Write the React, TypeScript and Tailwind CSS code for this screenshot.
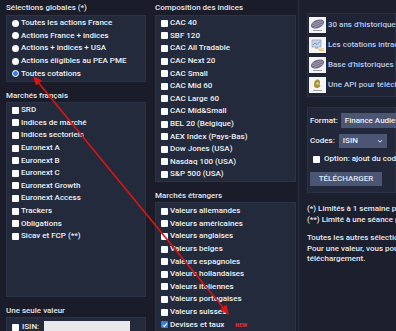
import React from 'react';

const Check = ({ checked = false }: { checked?: boolean }) =>
  checked ? (
    <span className="flex h-[7px] w-[7px] shrink-0 items-center justify-center rounded-[1px] bg-[#2f7fe6]">
      <svg viewBox="0 0 8 8" className="h-[6px] w-[6px]">
        <path d="M1.3 4.2 3.2 6 6.7 1.8" fill="none" stroke="#fff" strokeWidth="1.5" />
      </svg>
    </span>
  ) : (
    <span className="h-[7px] w-[7px] shrink-0 rounded-[1px] bg-white" />
  );

const Radio = ({ on = false }: { on?: boolean }) =>
  on ? (
    <span className="h-[7px] w-[7px] shrink-0 rounded-full border-[1.5px] border-white bg-[#2f7fe6]" />
  ) : (
    <span className="h-[7px] w-[7px] shrink-0 rounded-full bg-white" />
  );

const Row = ({ children, label }: { children: React.ReactNode; label: string }) => (
  <div className="flex h-[12.6px] items-center gap-[2px] whitespace-nowrap">
    {children}
    <span>{label}</span>
  </div>
);

const Title = ({ text }: { text: string }) => (
  <div className="h-[12px] whitespace-nowrap leading-[12px] text-[#e4e6ec]">{text}</div>
);

const globales = [
  'Toutes les actions France',
  'Actions France + indices',
  'Actions + indices + USA',
  'Actions éligibles au PEA PME',
  'Toutes cotations',
];

const francais = [
  'SRD',
  'Indices de marché',
  'Indices sectoriels',
  'Euronext A',
  'Euronext B',
  'Euronext C',
  'Euronext Growth',
  'Euronext Access',
  'Trackers',
  'Obligations',
  'Sicav et FCP (**)',
];

const indices = [
  'CAC 40',
  'SBF 120',
  'CAC All Tradable',
  'CAC Next 20',
  'CAC Small',
  'CAC Mid 60',
  'CAC Large 60',
  'CAC Mid&Small',
  'BEL 20 (Belgique)',
  'AEX Index (Pays-Bas)',
  'Dow Jones (USA)',
  'Nasdaq 100 (USA)',
  'S&P 500 (USA)',
];

const etrangers = [
  'Valeurs allemandes',
  'Valeurs américaines',
  'Valeurs anglaises',
  'Valeurs belges',
  'Valeurs espagnoles',
  'Valeurs hollandaises',
  'Valeurs italiennes',
  'Valeurs portugaises',
  'Valeurs suisses',
];

const Globe = () => (
  <svg viewBox="0 0 17 16" className="h-[16px] w-[17px] shrink-0">
    <rect width="17" height="16" fill="#f4f4f4" />
    <ellipse cx="8.5" cy="7" rx="7" ry="4" transform="rotate(-22 8.5 7)" fill="#6f6a86" />
    <path d="M3 9 14 4.5M3.5 7 12 3.5M5 10.5 14.5 6.5" stroke="#b9b4cc" strokeWidth="0.7" />
    <rect x="4" y="13" width="9" height="1" fill="#9a9aa8" />
  </svg>
);

const Screen = () => (
  <svg viewBox="0 0 17 16" className="h-[16px] w-[17px] shrink-0">
    <rect width="17" height="16" fill="#f4f4f4" />
    <rect x="3" y="3" width="9" height="7" fill="#c9d6ea" stroke="#7f8ea8" strokeWidth="0.6" />
    <path d="M4 8 6 6 8 7.5 11 4.5" stroke="#3b6fc4" strokeWidth="0.7" fill="none" />
    <rect x="6" y="10.5" width="3" height="1" fill="#7f8ea8" />
    <path d="M9 12h6M10 13.5h5" stroke="#d8b84a" strokeWidth="0.8" />
  </svg>
);

const Api = () => (
  <svg viewBox="0 0 17 16" className="h-[16px] w-[17px] shrink-0">
    <rect width="17" height="16" fill="#f4f4f4" />
    <path d="M7 3c2-1 4 0 4 2s-1 2 0 3-1 3-3 3-3-1-3-3 0-4 2-5z" fill="#a8963a" />
    <circle cx="8.5" cy="6.5" r="1.2" fill="#e3d27a" />
    <rect x="4" y="13" width="9" height="1" fill="#a0a0a0" />
  </svg>
);

export default function App() {
  return (
    <div className="relative h-[331px] w-[396px] overflow-hidden bg-[#1a1d29] font-['Roboto',sans-serif] text-[8px] font-medium text-[#eef0f4]">
      <div className="flex h-full">
        {/* colonne 1 */}
        <div className="ml-[6px] w-[140px] shrink-0 pt-[2px]">
          <Title text="Sélections globales (*)" />
          <div className="mt-[1px] h-[67px] border border-[#2c3346] bg-[#232a3c] pl-[5px] pt-[1px]">
            {globales.map((g, i) => (
              <Row key={g} label={g}>
                <Radio on={i === 4} />
              </Row>
            ))}
          </div>
          <div className="mt-[8px]">
            <Title text="Marchés français" />
          </div>
          <div className="h-[195px] border border-[#2c3346] bg-[#232a3c] pl-[5px] pt-[1px]">
            {francais.map((f) => (
              <Row key={f} label={f}>
                <Check />
              </Row>
            ))}
          </div>
          <div className="mt-[8px]">
            <Title text="Une seule valeur" />
          </div>
          <div className="h-[30px] border border-[#2c3346] bg-[#232a3c] pl-[5px] pt-[3px]">
            <div className="flex h-[12px] items-center gap-[3px]">
              <Check />
              <span>ISIN:</span>
              <span className="ml-[2px] h-[12px] w-[86px] bg-[#e9e9eb]" />
            </div>
          </div>
        </div>

        {/* colonne 2 */}
        <div className="ml-[9px] w-[141px] shrink-0 pt-[2px]">
          <Title text="Composition des indices" />
          <div className="mt-[1px] h-[167px] border border-[#2c3346] bg-[#232a3c] pl-[5px] pt-[1px]">
            {indices.map((x) => (
              <Row key={x} label={x}>
                <Check />
              </Row>
            ))}
          </div>
          <div className="mt-[8px]">
            <Title text="Marchés étrangers" />
          </div>
          <div className="h-[140px] border border-[#2c3346] bg-[#232a3c] pl-[5px] pt-[2px]">
            {etrangers.map((x) => (
              <Row key={x} label={x}>
                <Check />
              </Row>
            ))}
            <div className="flex h-[12.6px] items-center gap-[2px] whitespace-nowrap">
              <Check checked />
              <span>Devises et taux</span>
              <span className="ml-[9px] text-[5.5px] font-bold text-[#e3342f]">NEW</span>
            </div>
          </div>
        </div>

        {/* colonne 3 */}
        <div className="ml-[2px] min-w-0 flex-1 border-l border-[#272c3c] bg-[#1c1f2d] pl-[8px] pt-[13px]">
          <div className="h-[84px] border border-[#2b3144] bg-[#1f2333] pl-[1px] pt-[1px] text-[#b9cbee]">
            <div className="flex h-[20px] items-center gap-[2px] whitespace-nowrap">
              <Globe />
              <span>30 ans d'historiques boursiers</span>
            </div>
            <div className="flex h-[20px] items-center gap-[2px] whitespace-nowrap">
              <Screen />
              <span>Les cotations intraday</span>
            </div>
            <div className="flex h-[20px] items-center gap-[2px] whitespace-nowrap">
              <Globe />
              <span>Base d'historiques intraday</span>
            </div>
            <div className="flex h-[20px] items-center gap-[2px] whitespace-nowrap">
              <Api />
              <span>Une API pour télécharger</span>
            </div>
          </div>

          <div className="mt-[10px] h-[86px] border border-[#2b3144] bg-[#222839] pl-[2px] pt-[5px]">
            <div className="flex h-[15px] items-center whitespace-nowrap">
              <span>Format:</span>
              <span className="ml-[3px] flex h-[15px] flex-1 items-center bg-[#4b5674] px-[4px]">
                Finance Audience
              </span>
            </div>
            <div className="mt-[5px] flex h-[15px] items-center whitespace-nowrap">
              <span>Codes:</span>
              <span className="ml-[4px] flex h-[14px] w-[48px] items-center justify-between bg-[#4b5674] px-[4px]">
                ISIN
                <svg viewBox="0 0 8 8" className="h-[6px] w-[6px]">
                  <path d="M1.5 3 4 5.5 6.5 3" fill="none" stroke="#fff" strokeWidth="1.3" />
                </svg>
              </span>
            </div>
            <div className="mt-[5px] flex h-[12px] items-center gap-[4px] whitespace-nowrap pl-[3px]">
              <Check />
              <span>Option: ajout du code</span>
            </div>
            <div className="mt-[7px] flex h-[14px] w-[72px] items-center justify-center bg-[#4b5674] text-[8px] text-[#dfe6f3]">
              TÉLÉCHARGER
            </div>
          </div>

          <div className="mt-[11px] whitespace-nowrap leading-[10.5px] text-[#e6e8ee]">
            <p>(*) Limités à 1 semaine par téléchargement.</p>
            <p>(**) Limité à une séance par téléchargement.</p>
            <p className="mt-[8px]">Toutes les autres sélections sont</p>
            <p>Pour une valeur, vous pouvez choisir</p>
            <p>téléchargement.</p>
          </div>
        </div>
      </div>

      {/* flèche rouge */}
      <svg className="pointer-events-none absolute left-0 top-0 h-[331px] w-[396px]" viewBox="0 0 396 331">
        <line x1="37" y1="81" x2="225" y2="310" stroke="#e0120f" strokeWidth="1.6" />
        <polygon points="33,76 42,80.5 36,85.5" fill="#e0120f" />
        <polygon points="229,315 226.5,304.5 220,309.5" fill="#e0120f" />
      </svg>
    </div>
  );
}
